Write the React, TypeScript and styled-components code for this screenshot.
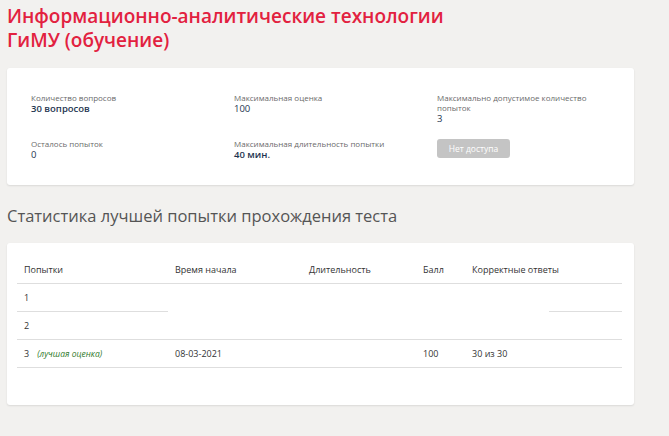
import React, { FC } from 'react'
import styled, { createGlobalStyle } from 'styled-components'

const GlobalStyle = createGlobalStyle`
  html, body {
    margin: 0;
    padding: 0;
    background: #f2f1ef;
  }
  body {
    font-family: 'Open Sans', 'Noto Sans', sans-serif;
    color: #333;
  }
`

const Page = styled.div`
  padding: 4px 35px 31px 7px;
  width: 627px;
`

const Title = styled.h1`
  margin: 0;
  font-size: 19px;
  line-height: 24px;
  font-weight: 600;
  color: #e2213f;
`

const Card = styled.section<{ $pad: string; $top?: number }>`
  background: #fff;
  border-radius: 3px;
  box-shadow: 0 1px 2px rgba(0, 0, 0, 0.1);
  padding: ${({ $pad }) => $pad};
  margin-top: ${({ $top }) => $top ?? 0}px;
`

const InfoGrid = styled.div`
  display: grid;
  grid-template-columns: 203px 203px 150px;
  row-gap: 15px;
`

const Field = styled.div`
  display: flex;
  flex-direction: column;
  align-items: flex-start;
`

const Label = styled.span`
  font-size: 8px;
  line-height: 10px;
  color: #6a6a6a;
`

const Value = styled.span<{ $bold?: boolean }>`
  font-size: 9.5px;
  line-height: 11px;
  color: #1e3550;
  font-weight: ${({ $bold }) => ($bold ? 600 : 400)};
`

const Button = styled.button`
  border: none;
  border-radius: 3px;
  background: #c4c4c4;
  color: #fff;
  font-family: inherit;
  font-size: 8.5px;
  width: 73px;
  height: 19px;
  padding: 0;
  cursor: default;
`

const Heading = styled.h2`
  margin: 20px 0 16px;
  font-size: 16.5px;
  line-height: 22px;
  font-weight: 400;
  color: #555;
`

const Table = styled.table`
  width: 605px;
  table-layout: fixed;
  border-collapse: collapse;
  font-size: 9px;
  color: #333;
`

const Th = styled.th`
  text-align: left;
  font-weight: 400;
  white-space: nowrap;
  height: 28px;
  padding: 0 7px;
  border-bottom: 1px solid #dedede;
`

const Td = styled.td<{ $line?: boolean }>`
  height: 27px;
  padding: 0 7px;
  white-space: nowrap;
  border-bottom: ${({ $line }) => ($line ? '1px solid #dedede' : 'none')};
`

const Best = styled.em`
  margin-left: 8px;
  font-size: 8.5px;
  color: #2f7a2a;
`

type InfoItem = { label: string; value?: string; bold?: boolean }

const info: InfoItem[] = [
  { label: 'Количество вопросов', value: '30 вопросов', bold: true },
  { label: 'Максимальная оценка', value: '100' },
  { label: 'Максимально допустимое количество попыток', value: '3' },
  { label: 'Осталось попыток', value: '0' },
  { label: 'Максимальная длительность попытки', value: '40 мин.', bold: true },
]

const columns = [
  { title: 'Попытки', width: 151 },
  { title: 'Время начала', width: 134 },
  { title: 'Длительность', width: 114 },
  { title: 'Балл', width: 49 },
  { title: 'Корректные ответы', width: 84 },
  { title: '', width: 73 },
]

const App: FC = () => (
  <Page>
    <GlobalStyle />
    <Title>
      Информационно-аналитические технологии
      <br />
      ГиМУ (обучение)
    </Title>

    <Card $pad="25px 24px 25px 24px" $top={16}>
      <InfoGrid>
        {info.map(item => (
          <Field key={item.label}>
            <Label>{item.label}</Label>
            <Value $bold={item.bold}>{item.value}</Value>
          </Field>
        ))}
        <Field>
          <Button disabled>Нет доступа</Button>
        </Field>
      </InfoGrid>
    </Card>

    <Heading>Статистика лучшей попытки прохождения теста</Heading>

    <Card $pad="12px 12px 37px 10px">
      <Table>
        <colgroup>
          {columns.map((c, i) => (
            <col key={i} style={{ width: c.width }} />
          ))}
        </colgroup>
        <thead>
          <tr>
            {columns.map((c, i) => (
              <Th key={i}>{c.title}</Th>
            ))}
          </tr>
        </thead>
        <tbody>
          <tr>
            <Td $line>1</Td>
            <Td rowSpan={2} $line />
            <Td rowSpan={2} $line />
            <Td rowSpan={2} $line />
            <Td rowSpan={2} $line />
            <Td $line />
          </tr>
          <tr>
            <Td $line>2</Td>
            <Td $line />
          </tr>
          <tr>
            <Td $line>
              3<Best>(лучшая оценка)</Best>
            </Td>
            <Td $line>08-03-2021</Td>
            <Td $line />
            <Td $line>100</Td>
            <Td $line>30 из 30</Td>
            <Td $line />
          </tr>
        </tbody>
      </Table>
    </Card>
  </Page>
)

export default App
